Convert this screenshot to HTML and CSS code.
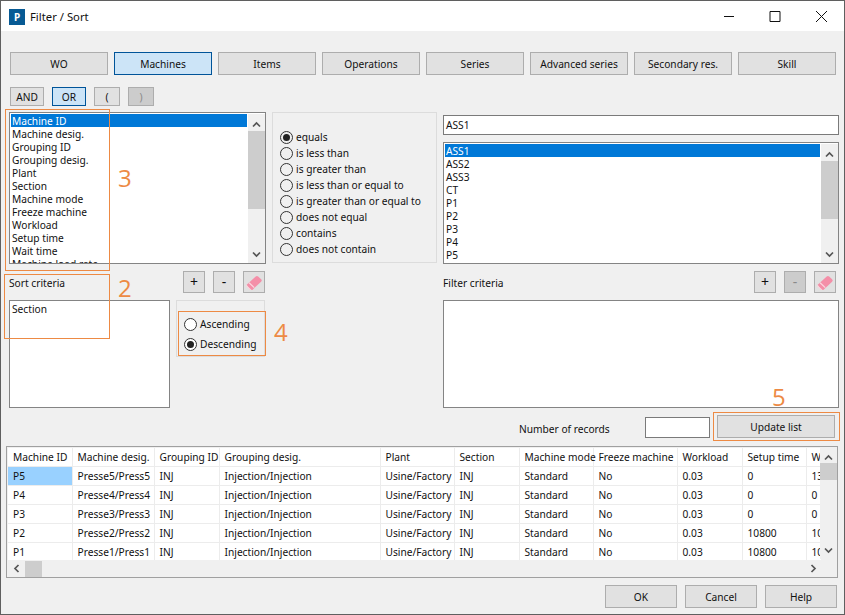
FILE: index.html
```html
<!DOCTYPE html>
<html lang="en">
<head>
<meta charset="utf-8">
<title>Filter / Sort</title>
<link rel="stylesheet" href="styles.css">
</head>
<body>
<svg class="defs" width="0" height="0" aria-hidden="true">
  <defs>
    <symbol id="eraser" viewBox="0 0 16 16">
      <path d="M1.5 10.5 9.500 3.200a1.600 1.600 0 0 1 2.200 0l2.600 2.400a1.500 1.500 0 0 1 0 2.200L6.500 15H4.600z" fill="#f48fa8"/>
      <path d="M1.200 10.700 5.900 15H4.500L1 11.800z M4 8.300 8.600 12.600 7.800 13.400 3.200 9z" fill="#fbd5de"/>
    </symbol>
    <symbol id="up" viewBox="0 0 9 7"><path d="M1 5.500 4.500 2 8 5.500" fill="none" stroke="#555" stroke-width="1.700"/></symbol>
    <symbol id="down" viewBox="0 0 9 7"><path d="M1 1.500 4.500 5 8 1.500" fill="none" stroke="#555" stroke-width="1.700"/></symbol>
    <symbol id="left" viewBox="0 0 7 9"><path d="M5.500 1 2 4.500 5.500 8" fill="none" stroke="#555" stroke-width="1.700"/></symbol>
    <symbol id="right" viewBox="0 0 7 9"><path d="M1.500 1 5 4.500 1.500 8" fill="none" stroke="#555" stroke-width="1.700"/></symbol>
  </defs>
</svg>
<div class="window">
  <header class="titlebar">
    <span class="app-icon">P</span>
    <span class="title">Filter / Sort</span>
    <span class="win-controls">
      <svg class="win-btn" viewBox="0 0 46 16"><path d="M18 8.500h10" stroke="#111" fill="none"/></svg>
      <svg class="win-btn" viewBox="0 0 46 16"><path d="M18 3.500h10v10h-10z" stroke="#111" fill="none"/></svg>
      <svg class="win-btn" viewBox="0 0 46 16"><path d="M18 3l11 11M29 3 18 14" stroke="#111" fill="none"/></svg>
    </span>
  </header>

  <main class="content">
    <nav class="tabs">
      <button class="btn">WO</button>
      <button class="btn active">Machines</button>
      <button class="btn">Items</button>
      <button class="btn">Operations</button>
      <button class="btn">Series</button>
      <button class="btn">Advanced series</button>
      <button class="btn">Secondary res.</button>
      <button class="btn">Skill</button>
    </nav>

    <div class="logic">
      <button class="btn wide">AND</button>
      <button class="btn wide active">OR</button>
      <button class="btn narrow">(</button>
      <button class="btn narrow disabled">)</button>
    </div>

    <section class="top-row">
      <div class="listbox fields">
        <ul class="items">
          <li class="selected">Machine ID</li>
          <li>Machine desig.</li>
          <li>Grouping ID</li>
          <li>Grouping desig.</li>
          <li>Plant</li>
          <li>Section</li>
          <li>Machine mode</li>
          <li>Freeze machine</li>
          <li>Workload</li>
          <li>Setup time</li>
          <li>Wait time</li>
          <li>Machine load rate</li>
        </ul>
        <div class="vscroll">
          <svg class="arrow"><use href="#up"/></svg>
          <span class="thumb thumb-fields"></span>
          <svg class="arrow end"><use href="#down"/></svg>
        </div>
      </div>

      <fieldset class="group operators">
        <label class="radio"><span class="dot on"></span>equals</label>
        <label class="radio"><span class="dot"></span>is less than</label>
        <label class="radio"><span class="dot"></span>is greater than</label>
        <label class="radio"><span class="dot"></span>is less than or equal to</label>
        <label class="radio"><span class="dot"></span>is greater than or equal to</label>
        <label class="radio"><span class="dot"></span>does not equal</label>
        <label class="radio"><span class="dot"></span>contains</label>
        <label class="radio"><span class="dot"></span>does not contain</label>
      </fieldset>

      <div class="values">
        <div class="field value-input">ASS1</div>
        <div class="listbox value-list">
          <ul class="items">
            <li class="selected">ASS1</li>
            <li>ASS2</li>
            <li>ASS3</li>
            <li>CT</li>
            <li>P1</li>
            <li>P2</li>
            <li>P3</li>
            <li>P4</li>
            <li>P5</li>
          </ul>
          <div class="vscroll">
            <svg class="arrow"><use href="#up"/></svg>
            <span class="thumb thumb-values"></span>
            <svg class="arrow end"><use href="#down"/></svg>
          </div>
        </div>
      </div>
    </section>

    <section class="tools-row">
      <div class="tools left-tools">
        <span class="caption">Sort criteria</span>
        <button class="btn icon">+</button>
        <button class="btn icon">-</button>
        <button class="btn icon"><svg class="eraser"><use href="#eraser"/></svg></button>
      </div>
      <div class="tools right-tools">
        <span class="caption">Filter criteria</span>
        <button class="btn icon">+</button>
        <button class="btn icon disabled">-</button>
        <button class="btn icon"><svg class="eraser"><use href="#eraser"/></svg></button>
      </div>
    </section>

    <section class="criteria-row">
      <div class="listbox sort-list"><ul class="items"><li>Section</li></ul></div>
      <fieldset class="group order">
        <label class="radio"><span class="dot"></span>Ascending</label>
        <label class="radio"><span class="dot on"></span>Descending</label>
      </fieldset>
      <div class="listbox filter-list"></div>
    </section>

    <section class="records-row">
      <span class="records-label">Number of records</span>
      <div class="field records-input"></div>
      <button class="btn update">Update list</button>
    </section>

    <section class="grid-panel">
      <div class="grid-view">
        <div class="grid-clip">
          <table class="grid">
            <colgroup>
              <col class="c64"><col class="c82"><col class="c65"><col class="c161"><col class="c74"><col class="c65"><col class="c74"><col class="c84"><col class="c65"><col class="c64"><col class="c64">
            </colgroup>
            <thead>
              <tr><th>Machine ID</th><th>Machine desig.</th><th>Grouping ID</th><th>Grouping desig.</th><th>Plant</th><th>Section</th><th>Machine mode</th><th>Freeze machine</th><th>Workload</th><th>Setup time</th><th>Wait time</th></tr>
            </thead>
            <tbody>
              <tr><td class="current">P5</td><td>Presse5/Press5</td><td>INJ</td><td>Injection/Injection</td><td>Usine/Factory</td><td>INJ</td><td>Standard</td><td>No</td><td>0.03</td><td>0</td><td>13200</td></tr>
              <tr><td>P4</td><td>Presse4/Press4</td><td>INJ</td><td>Injection/Injection</td><td>Usine/Factory</td><td>INJ</td><td>Standard</td><td>No</td><td>0.03</td><td>0</td><td>0</td></tr>
              <tr><td>P3</td><td>Presse3/Press3</td><td>INJ</td><td>Injection/Injection</td><td>Usine/Factory</td><td>INJ</td><td>Standard</td><td>No</td><td>0.03</td><td>0</td><td>0</td></tr>
              <tr><td>P2</td><td>Presse2/Press2</td><td>INJ</td><td>Injection/Injection</td><td>Usine/Factory</td><td>INJ</td><td>Standard</td><td>No</td><td>0.03</td><td>10800</td><td>10800</td></tr>
              <tr><td>P1</td><td>Presse1/Press1</td><td>INJ</td><td>Injection/Injection</td><td>Usine/Factory</td><td>INJ</td><td>Standard</td><td>No</td><td>0.03</td><td>10800</td><td>10800</td></tr>
            </tbody>
          </table>
        </div>
        <div class="vscroll grid-v">
          <svg class="arrow"><use href="#up"/></svg>
          <span class="thumb thumb-grid"></span>
          <svg class="arrow end"><use href="#down"/></svg>
        </div>
      </div>
      <div class="hscroll">
        <svg class="arrow-h"><use href="#left"/></svg>
        <span class="thumb-h"></span>
        <svg class="arrow-h end-h"><use href="#right"/></svg>
      </div>
    </section>

    <footer class="actions">
      <button class="btn action">OK</button>
      <button class="btn action">Cancel</button>
      <button class="btn action">Help</button>
    </footer>
  </main>

  <div class="mark box-3"></div>
  <div class="mark box-2"></div>
  <div class="mark box-4"></div>
  <div class="mark box-5"></div>
  <span class="digit d-3">3</span>
  <span class="digit d-2">2</span>
  <span class="digit d-4">4</span>
  <span class="digit d-5">5</span>
</div>
</body>
</html>
```

FILE: styles.css
```css
* { box-sizing: border-box; }
html, body { margin: 0; padding: 0; }
body { width: 845px; height: 615px; overflow: hidden; background: #f0f0f0; }
.defs { position: absolute; }

.window {
  position: relative;
  width: 845px;
  height: 615px;
  background: #f0f0f0;
  border: 1px solid #5f5f5f;
  font-family: "Noto Sans", "Open Sans", sans-serif;
  font-size: 10.2px;
  color: #111;
  overflow: hidden;
}

.titlebar {
  display: flex;
  align-items: center;
  height: 30px;
  background: #fff;
  padding-left: 8px;
}
.app-icon {
  width: 16px;
  height: 16px;
  background: #075a94;
  color: #fff;
  font-size: 10px;
  font-weight: 700;
  line-height: 16px;
  text-align: center;
  margin-top: 1px;
}
.title { margin-left: 5px; font-size: 11.3px; color: #111; }
.win-controls { display: flex; margin-left: auto; margin-top: -1px; }
.win-btn { width: 46px; height: 16px; display: block; }

.content { padding: 21px 0 0 8px; }

.btn {
  font: inherit;
  color: #111;
  background: #e1e1e1;
  border: 1px solid #adadad;
  padding: 0;
  display: flex;
  align-items: center;
  justify-content: center;
}
.btn.active { background: #cce4f7; border-color: #005499; }
.btn.disabled { background: #cccccc; color: #8a8a8a; }

.tabs { display: flex; gap: 6px; padding-left: 1px; }
.tabs .btn { width: 98px; height: 23px; }

.logic { display: flex; gap: 8px; margin-top: 12px; padding-left: 1px; }
.logic .btn { height: 19px; }
.wide { width: 34px; }
.narrow { width: 26px; }

.top-row { display: flex; gap: 6px; margin-top: 6px; height: 152px; }
.listbox {
  display: flex;
  background: #fff;
  border: 1px solid #848484;
  overflow: hidden;
}
.fields { width: 257px; padding: 1px 0 0 1px; }
.items {
  list-style: none;
  margin: 0;
  padding: 0;
  flex: 1;
  overflow: hidden;
}
.items li { height: 13px; line-height: 15px; padding-left: 1px; white-space: nowrap; }
.items li.selected { background: #0078d7; color: #fff; }

.vscroll {
  position: relative;
  width: 17px;
  background: #f0f0f0;
  display: flex;
  flex-direction: column;
  align-items: center;
  margin-left: 1px;
}
.arrow { width: 9px; height: 7px; margin-top: 7px; flex: none; }
.arrow.end { margin-top: auto; margin-bottom: 5px; }
.thumb { display: block; width: 100%; background: #cdcdcd; flex: none; margin-top: 3px; }
.thumb-fields { height: 78px; }
.thumb-values { height: 58px; }
.thumb-grid { height: 17px; margin-top: 2px; }

.group {
  margin: 0;
  background: #f0f0f0;
  border: 1px solid #dcdcdc;
  display: flex;
  flex-direction: column;
}
.operators { width: 165px; height: 151px; padding: 16px 0 0 7px; }
.radio { display: flex; align-items: center; height: 16px; white-space: nowrap; }
.dot {
  width: 13px;
  height: 13px;
  border: 1px solid #333;
  border-radius: 50%;
  background: #fff;
  margin-right: 3px;
  flex: none;
  display: flex;
  align-items: center;
  justify-content: center;
}
.operators .dot { background: #f0f0f0; }
.dot.on::after {
  content: "";
  width: 7px;
  height: 7px;
  border-radius: 50%;
  background: #222;
}

.values { width: 396px; display: flex; flex-direction: column; padding-top: 3px; }
.field { background: #fff; border: 1px solid #7a7a7a; }
.value-input { height: 20px; line-height: 18px; padding-left: 2px; }
.value-list { height: 122px; margin-top: 7px; padding: 1px 0 0 1px; }

.tools-row { display: flex; gap: 6px; margin-top: 7px; height: 22px; }
.tools { display: flex; gap: 8px; align-items: center; }
.left-tools { width: 257px; padding-right: 1px; }
.right-tools { width: 393px; margin-left: 171px; }
.caption { margin-right: auto; position: relative; top: 1px; }
.btn.icon { width: 22px; height: 22px; font-size: 14px; line-height: 1; }
.eraser { width: 18px; height: 18px; display: block; }

.criteria-row { display: flex; gap: 6px; margin-top: 7px; height: 108px; }
.sort-list { width: 161px; padding: 1px 0 0 1px; }
.order { width: 89px; height: 57px; padding: 15px 0 0 7px; gap: 4px; }
.filter-list { width: 396px; margin-left: 172px; }

.records-row { display: flex; align-items: center; height: 23px; margin-top: 7px; padding-left: 510px; }
.records-label { width: 126px; position: relative; top: 2px; }
.records-input { width: 65px; height: 21px; margin-top: 2px; }
.btn.update { width: 118px; height: 23px; margin-left: 7px; }

.grid-panel {
  width: 832px;
  height: 132px;
  margin: 8px 0 0 -3px;
  background: #f0f0f0;
  border: 1px solid #a0a0a0;
  display: flex;
  flex-direction: column;
}
.grid-view { position: relative; display: flex; height: 113px; overflow: hidden; }
.grid-clip {
  width: 813px;
  height: 112px;
  margin: 1px 0 0 1px;
  flex: none;
  overflow: hidden;
  background: #fff;
}
.grid {
  table-layout: fixed;
  width: 862px;
  border-collapse: collapse;
}
.c64 { width: 64px; }
.c65 { width: 65px; }
.c74 { width: 74px; }
.c82 { width: 82px; }
.c84 { width: 84px; }
.c161 { width: 161px; }
.grid th, .grid td {
  font-weight: 400;
  text-align: left;
  padding: 0 0 0 5px;
  height: 19px;
  white-space: nowrap;
  border-right: 1px solid #ececec;
  border-bottom: 1px solid #ececec;
}
.grid th { height: 18px; }
.grid td.current { background: #99d1ff; }
.grid-v { height: 112px; margin: 0; position: absolute; right: 0; top: 0; background: #f0f0f0; }

.hscroll { position: relative; display: flex; align-items: center; height: 17px; background: #f0f0f0; padding-left: 6px; }
.arrow-h { width: 7px; height: 9px; flex: none; }
.thumb-h { width: 17px; height: 16px; background: #cdcdcd; margin-left: 5px; }
.end-h { margin-left: auto; margin-right: 20px; }

.actions { display: flex; justify-content: flex-end; gap: 8px; margin-top: 7px; padding-right: 7px; }
.btn.action { width: 72px; height: 23px; }

.mark { position: absolute; border: 1px solid #ed8a44; }
.box-3 { left: 4px; top: 108px; width: 105px; height: 162px; }
.box-2 { left: 3px; top: 273px; width: 106px; height: 65px; }
.box-4 { left: 177px; top: 310px; width: 88px; height: 45px; }
.box-5 { left: 712px; top: 411px; width: 127px; height: 29px; }
.digit {
  position: absolute;
  color: #ed8a44;
  font-size: 24px;
  line-height: 24px;
  font-family: "Open Sans", "Noto Sans", sans-serif;
}
.d-3 { left: 117px; top: 165px; }
.d-2 { left: 117px; top: 275px; }
.d-4 { left: 273px; top: 319px; }
.d-5 { left: 771px; top: 384px; }
```
